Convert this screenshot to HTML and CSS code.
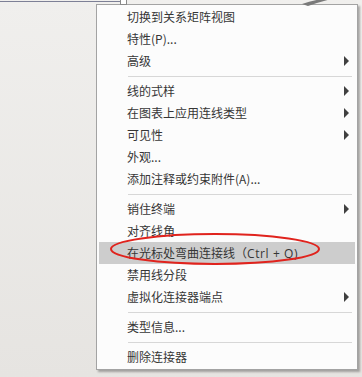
FILE: index.html
```html
<!DOCTYPE html>
<html lang="zh">
<head>
    <meta charset="UTF-8">
    <title>连接器菜单</title>
    <link rel="stylesheet" href="styles.css">
</head>
<body>
    <div class="topbar">
        <div class="tab-line"></div>
        <div class="tab-box"></div>
        <svg class="curve" width="40" height="8" viewBox="0 0 40 8">
            <path d="M0 6 Q14 1 30 0 L34 0 Q20 3 6 8 Z" fill="#7a7a7a"/>
        </svg>
    </div>

    <ul class="menu">
        <li class="item">切换到关系矩阵视图</li>
        <li class="item">特性(P)...</li>
        <li class="item sub">高级</li>
        <li class="sep"></li>
        <li class="item sub">线的式样</li>
        <li class="item sub">在图表上应用连线类型</li>
        <li class="item sub">可见性</li>
        <li class="item">外观...</li>
        <li class="item">添加注释或约束附件(A)...</li>
        <li class="sep"></li>
        <li class="item sub">销住终端</li>
        <li class="item">对齐线角</li>
        <li class="item active">在光标处弯曲连接线（<span class="keys">Ctrl + Q)</span></li>
        <li class="item">禁用线分段</li>
        <li class="item sub">虚拟化连接器端点</li>
        <li class="sep"></li>
        <li class="item">类型信息...</li>
        <li class="sep"></li>
        <li class="item">删除连接器</li>
    </ul>

    <!-- red mark around the highlighted command -->
    <svg class="mark" width="362" height="377" viewBox="0 0 362 377">
        <ellipse cx="215" cy="249" rx="104" ry="15" fill="none" stroke="#e0231d" stroke-width="2"/>
    </svg>
</body>
</html>
```

FILE: styles.css
```css
body {
    margin: 0;
    height: 377px;
    overflow: hidden;
    font-family: "Noto Sans CJK SC", "Noto Sans", sans-serif;
    font-size: 12px;
    color: #363636;
    background: linear-gradient(180deg, #f0efed, #e6e4e1);
    position: relative;
}
.topbar {
    height: 4px;
    position: relative;
}
.tab-line {
    position: absolute;
    top: 1px;
    left: 0;
    width: 120px;
    height: 1px;
    background: #7d8096;
}
.tab-box {
    position: absolute;
    top: -1px;
    left: 120px;
    width: 5px;
    height: 4px;
    border: 1px solid #8a8a8a;
    background: #fff;
}
.curve {
    position: absolute;
    top: -2px;
    left: 302px;
}
.menu {
    list-style: none;
    margin: 0 0 0 96px;
    padding: 1px 2px;
    width: 256px;
    background: #fcfcfc;
    border: 1px solid #a3a3a3;
    box-shadow: 2px 2px 2px rgba(0, 0, 0, 0.3);
}
.item {
    height: 22px;
    line-height: 22px;
    padding-left: 28px;
    position: relative;
    white-space: nowrap;
}
.item.active {
    background: #cdcdcd;
}
.keys {
    font-family: "Open Sans", sans-serif;
    letter-spacing: 0.6px;
}
.item.sub::after {
    content: "";
    position: absolute;
    right: 6px;
    top: 6px;
    border-left: 5px solid #404040;
    border-top: 5px solid transparent;
    border-bottom: 5px solid transparent;
}
.sep {
    height: 1px;
    margin: 4px 3px 3px 29px;
    background: #d7d7d7;
}
.mark {
    position: absolute;
    top: 0;
    left: 0;
}
```
